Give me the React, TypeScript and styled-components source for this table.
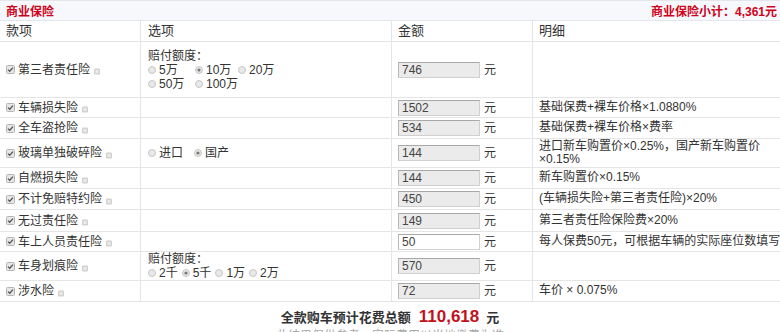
import React from 'react'
import styled, { createGlobalStyle } from 'styled-components'

const Global = createGlobalStyle`
  body {
    margin: 0;
    background: #fff;
    font-family: "Liberation Sans", Arial, "Noto Sans CJK SC", sans-serif;
    font-size: 12px;
    color: #333;
  }
`

const Wrap = styled.div`
  width: 780px;
  overflow: hidden;
`

const TitleBar = styled.div`
  height: 21px;
  box-sizing: border-box;
  border-top: 1px solid #e3e6ea;
  border-bottom: 1px solid #e3e6ea;
  background: #f6f8fb;
  display: flex;
  align-items: center;
  justify-content: space-between;
  padding: 0 3px 0 6px;
  color: #d0021b;
  font-weight: bold;
  font-size: 12px;
`

const Row = styled.div<{ $h: number }>`
  display: grid;
  grid-template-columns: 140px 251px 141px 1fr;
  height: ${(p) => p.$h}px;
  box-sizing: border-box;
  border-bottom: 1px solid #e5e5e5;
`

const Cell = styled.div<{ $pad?: number }>`
  display: flex;
  align-items: center;
  padding-left: ${(p) => p.$pad ?? 6}px;
  border-left: 1px solid #dfe6ee;
  line-height: 14px;
  min-width: 0;
  overflow: hidden;
  &:first-child {
    border-left: none;
  }
`

const HeadCell = styled(Cell)`
  font-size: 13px;
  color: #333;
`

const Label = styled.span`
  display: flex;
  align-items: center;
  white-space: nowrap;
`

const Options = styled.div`
  display: flex;
  flex-direction: column;
  line-height: 14px;
`

const OptLine = styled.div`
  display: flex;
  align-items: center;
`

const Opt = styled.span<{ $w?: number }>`
  display: inline-flex;
  align-items: center;
  width: ${(p) => (p.$w ? `${p.$w}px` : 'auto')};
  margin-right: ${(p) => (p.$w ? 0 : 4)}px;
  white-space: nowrap;
`

const AmountInput = styled.input<{ $editable?: boolean }>`
  width: 82px;
  height: 16px;
  box-sizing: border-box;
  padding: 0 0 0 3px;
  margin: 0 4px 0 0;
  font-family: "Liberation Sans", Arial, sans-serif;
  font-size: 12px;
  color: #444;
  background: ${(p) => (p.$editable ? '#fff' : '#ebebeb')};
  border: 1px solid #d0d0d0;
  border-top-color: #a8a8a8;
  border-left-color: #b8b8b8;
  outline: none;
`

const Detail = styled.div<{ $nowrap?: boolean }>`
  line-height: 13.5px;
  padding-right: 4px;
  white-space: ${(p) => (p.$nowrap ? 'nowrap' : 'normal')};
`

const TotalLine = styled.div`
  display: flex;
  justify-content: center;
  align-items: baseline;
  margin-top: 5px;
  height: 22px;
  font-weight: bold;
  font-size: 13px;
  color: #333;
`

const TotalNum = styled.span`
  color: #c3111b;
  font-size: 17px;
  margin: 0 7px 0 8px;
`

const Note = styled.div`
  text-align: center;
  color: #aaa;
  font-size: 12px;
  line-height: 14px;
`

const CheckBox = () => (
  <svg width="9" height="9" viewBox="0 0 9 9" style={{ marginRight: 3, flexShrink: 0 }}>
    <rect x="0.5" y="0.5" width="8" height="8" rx="1" fill="#e6e6e6" stroke="#b4b4b4" />
    <path d="M2 4.6 L3.7 6.3 L7 2.6" fill="none" stroke="#555" strokeWidth="1.3" />
  </svg>
)

const Help = () => (
  <svg width="6" height="7" viewBox="0 0 6 7" style={{ marginLeft: 4, marginTop: 4 }}>
    <rect x="0" y="0.5" width="6" height="6" rx="1" fill="#d2d2d2" />
    <rect x="1.5" y="2" width="3" height="3" fill="#ececec" />
  </svg>
)

const Radio = ({ on }: { on?: boolean }) => (
  <svg width="8" height="8" viewBox="0 0 8 8" style={{ marginRight: 3, flexShrink: 0 }}>
    <circle cx="4" cy="4" r="3.5" fill="#e8e8e8" stroke="#c6c6c6" />
    {on && <circle cx="4" cy="4" r="1.6" fill="#777" />}
  </svg>
)

type Item = {
  name: string
  h: number
  options?: React.ReactNode
  amount: string
  editable?: boolean
  detail?: React.ReactNode
  nowrap?: boolean
}

const items: Item[] = [
  {
    name: '第三者责任险',
    h: 56,
    options: (
      <Options>
        <OptLine>赔付额度：</OptLine>
        <OptLine>
          <Opt $w={47}><Radio />5万</Opt>
          <Opt $w={43}><Radio on />10万</Opt>
          <Opt><Radio />20万</Opt>
        </OptLine>
        <OptLine>
          <Opt $w={47}><Radio />50万</Opt>
          <Opt><Radio />100万</Opt>
        </OptLine>
      </Options>
    ),
    amount: '746',
  },
  { name: '车辆损失险', h: 20, amount: '1502', detail: '基础保费+裸车价格×1.0880%' },
  { name: '全车盗抢险', h: 21, amount: '534', detail: '基础保费+裸车价格×费率' },
  {
    name: '玻璃单独破碎险',
    h: 29,
    options: (
      <OptLine>
        <Opt $w={46}><Radio />进口</Opt>
        <Opt><Radio on />国产</Opt>
      </OptLine>
    ),
    amount: '144',
    detail: (
      <>
        进口新车购置价×0.25%，国产新车购置价
        <br />
        ×0.15%
      </>
    ),
  },
  { name: '自燃损失险', h: 21, amount: '144', detail: '新车购置价×0.15%' },
  { name: '不计免赔特约险', h: 21, amount: '450', detail: '(车辆损失险+第三者责任险)×20%' },
  { name: '无过责任险', h: 22, amount: '149', detail: '第三者责任险保险费×20%' },
  {
    name: '车上人员责任险',
    h: 20,
    amount: '50',
    editable: true,
    detail: '每人保费50元，可根据车辆的实际座位数填写',
    nowrap: true,
  },
  {
    name: '车身划痕险',
    h: 29,
    options: (
      <Options>
        <OptLine>赔付额度：</OptLine>
        <OptLine>
          <Opt><Radio />2千</Opt>
          <Opt><Radio on />5千</Opt>
          <Opt><Radio />1万</Opt>
          <Opt><Radio />2万</Opt>
        </OptLine>
      </Options>
    ),
    amount: '570',
  },
  { name: '涉水险', h: 21, amount: '72', detail: '车价 × 0.075%' },
]

const App = (): JSX.Element => {
  return (
    <Wrap>
      <Global />
      <TitleBar>
        <span>商业保险</span>
        <span>商业保险小计：4,361元</span>
      </TitleBar>
      <Row $h={21}>
        <HeadCell>款项</HeadCell>
        <HeadCell $pad={7}>选项</HeadCell>
        <HeadCell>金额</HeadCell>
        <HeadCell>明细</HeadCell>
      </Row>
      {items.map((it) => (
        <Row $h={it.h} key={it.name}>
          <Cell>
            <Label>
              <CheckBox />
              {it.name}
              <Help />
            </Label>
          </Cell>
          <Cell $pad={7}>{it.options}</Cell>
          <Cell>
            <AmountInput
              readOnly={!it.editable}
              $editable={it.editable}
              defaultValue={it.amount}
            />
            元
          </Cell>
          <Cell>
            <Detail $nowrap={it.nowrap}>{it.detail}</Detail>
          </Cell>
        </Row>
      ))}
      <TotalLine>
        全款购车预计花费总额
        <TotalNum>110,618</TotalNum>元
      </TotalLine>
      <Note>此结果仅供参考，实际费用以当地缴费为准</Note>
    </Wrap>
  )
}

export default App
